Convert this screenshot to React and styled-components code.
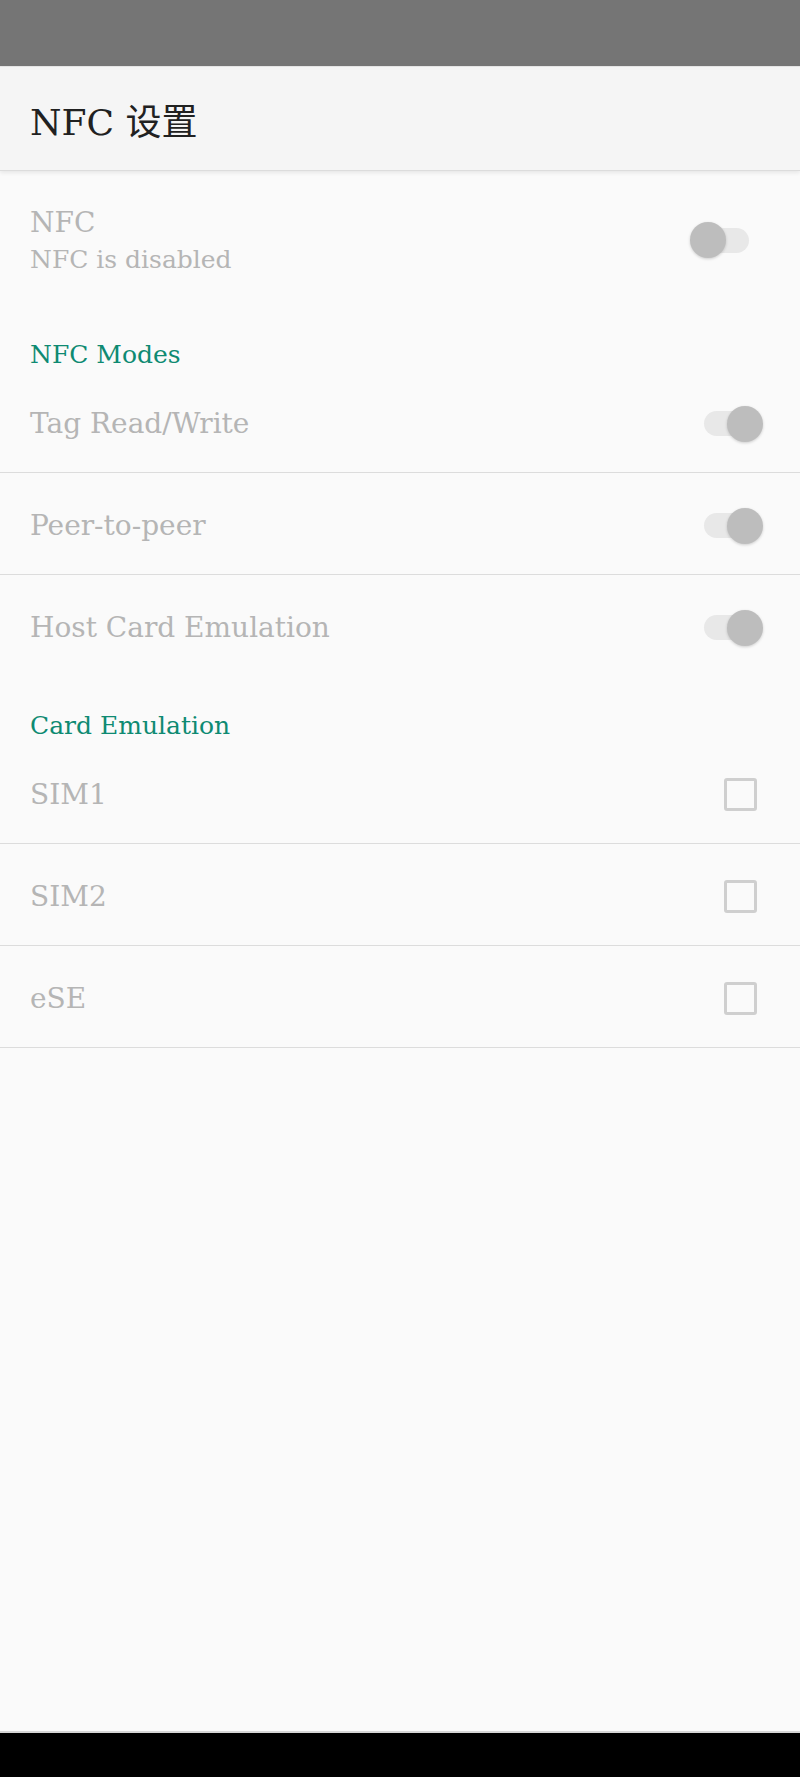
import styled, { createGlobalStyle } from "styled-components";

const GlobalStyle = createGlobalStyle`
  html, body {
    margin: 0;
    padding: 0;
    background: #fafafa;
  }
  body {
    font-family: "DejaVu Serif", "Liberation Serif", "Noto Sans CJK SC", serif;
  }
`;

const Screen = styled.div`
  width: 800px;
  height: 1777px;
  display: flex;
  flex-direction: column;
  background: #fafafa;
  overflow: hidden;
`;

const StatusBar = styled.div`
  height: 66px;
  flex-shrink: 0;
  background: #757575;
  border-bottom: 1px solid #e6e6e6;
`;

const Toolbar = styled.header`
  height: 103px;
  flex-shrink: 0;
  display: flex;
  align-items: center;
  padding-left: 30px;
  background: #f5f5f5;
  border-bottom: 1px solid #dcdcdc;
  box-shadow: 0 2px 4px rgba(0, 0, 0, 0.08);
  position: relative;
  z-index: 1;
`;

const Title = styled.h1`
  margin: 0;
  font-size: 36px;
  font-weight: 400;
  color: #212121;
  font-family: "DejaVu Serif", "Noto Sans CJK SC", serif;
`;

const Content = styled.main`
  flex: 1;
  display: flex;
  flex-direction: column;
`;

const Row = styled.div`
  height: ${(p) => p.$height || 97}px;
  padding: 4px 0 0 30px;
  display: flex;
  align-items: center;
  justify-content: space-between;
  border-bottom: ${(p) => (p.$divider ? "1px solid #dcdcdc" : "none")};
`;

const TextBlock = styled.div`
  display: flex;
  flex-direction: column;
  gap: 6px;
`;

const ItemTitle = styled.div`
  font-size: 28px;
  color: #b5b5b5;
  line-height: 34px;
`;

const Summary = styled.div`
  font-size: 25px;
  color: #b5b5b5;
  line-height: 28px;
`;

const Category = styled.div`
  height: 66px;
  display: flex;
  align-items: flex-end;
  padding: 0 0 1px 30px;
  box-sizing: border-box;
  font-size: 25px;
  color: #0e8a72;
  line-height: 30px;
`;

const SwitchWrap = styled.div`
  position: relative;
  width: 58px;
  height: 37px;
  margin-right: ${(p) => (p.$on ? 38 : 51)}px;
  display: flex;
  align-items: center;
  justify-content: ${(p) => (p.$on ? "flex-end" : "flex-start")};

  &::before {
    content: "";
    position: absolute;
    left: ${(p) => (p.$on ? "0" : "1px")};
    right: 0;
    top: 6px;
    height: 25px;
    border-radius: 13px;
    background: #e8e8e8;
  }
`;

const Thumb = styled.span`
  position: relative;
  width: 36px;
  height: 36px;
  border-radius: 50%;
  background: #bdbdbd;
  margin: ${(p) => (p.$on ? "0 -1px 0 0" : "0 0 0 -1px")};
  box-shadow: 0 1px 3px rgba(0, 0, 0, 0.18);
`;

const CheckBox = styled.span`
  width: 27px;
  height: 27px;
  margin-right: 43px;
  border: 3px solid #cfcfcf;
  border-radius: 3px;
`;

const NavBar = styled.div`
  height: 44px;
  flex-shrink: 0;
  background: #000;
  border-top: 2px solid #d6d6d6;
`;

const Switch = ({ on }) => (
  <SwitchWrap $on={on}>
    <Thumb $on={on} />
  </SwitchWrap>
);

const modes = ["Tag Read/Write", "Peer-to-peer", "Host Card Emulation"];
const cards = ["SIM1", "SIM2", "eSE"];

const App = () => {
  return (
    <Screen>
      <GlobalStyle />
      <StatusBar />
      <Toolbar>
        <Title>NFC 设置</Title>
      </Toolbar>
      <Content>
        <Row $height={130}>
          <TextBlock>
            <ItemTitle>NFC</ItemTitle>
            <Summary>NFC is disabled</Summary>
          </TextBlock>
          <Switch on={false} />
        </Row>
        <Category>NFC Modes</Category>
        {modes.map((m, i) => (
          <Row key={m} $divider={i < modes.length - 1}>
            <ItemTitle>{m}</ItemTitle>
            <Switch on />
          </Row>
        ))}
        <Category>Card Emulation</Category>
        {cards.map((c) => (
          <Row key={c} $divider>
            <ItemTitle>{c}</ItemTitle>
            <CheckBox />
          </Row>
        ))}
      </Content>
      <NavBar />
    </Screen>
  );
};

export default App;
